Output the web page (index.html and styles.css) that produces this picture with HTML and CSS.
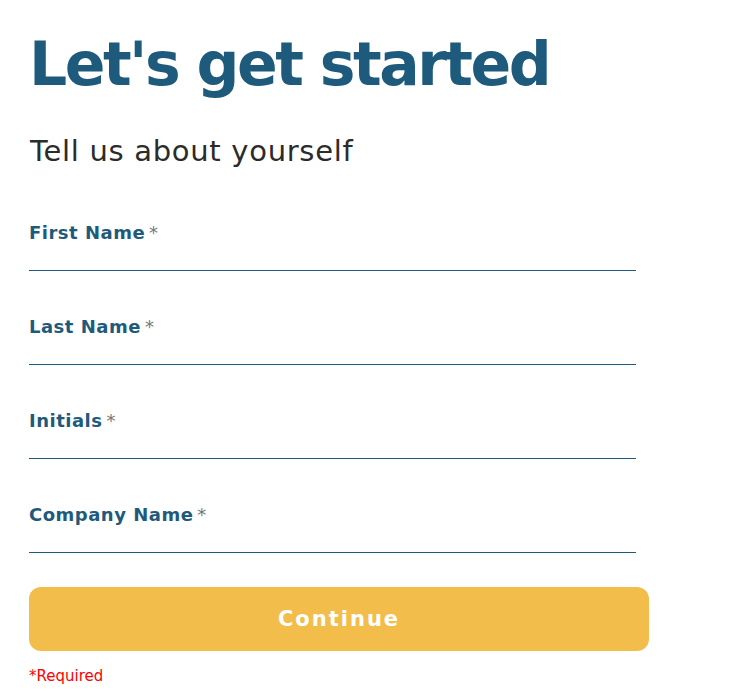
FILE: index.html
```html
<!DOCTYPE html>
<html lang="en">
<head>
    <meta charset="UTF-8">
    <meta name="viewport" content="width=device-width, initial-scale=1.0">
    <title>Let's get started</title>
    <link rel="stylesheet" href="styles.css">
</head>
<body>
    <div class="container">
        <h1>Let's get started</h1>
        <h2>Tell us about yourself</h2>

        <form class="signup">
            <div class="form-group">
                <label for="firstName">First Name<span class="req">*</span></label>
                <input type="text" id="firstName">
            </div>
            <div class="form-group">
                <label for="lastName">Last Name<span class="req">*</span></label>
                <input type="text" id="lastName">
            </div>
            <div class="form-group">
                <label for="initials">Initials<span class="req">*</span></label>
                <input type="text" id="initials">
            </div>
            <div class="form-group">
                <label for="company">Company Name<span class="req">*</span></label>
                <input type="text" id="company">
            </div>

            <button type="button">Continue</button>
            <p class="required-note">*Required</p>
        </form>
    </div>
</body>
</html>
```

FILE: styles.css
```css
body {
    margin: 0;
    font-family: "DejaVu Sans", Arial, sans-serif;
    background-color: #fff;
}
.container {
    width: 620px;
    padding: 26px 0 0 29px;
}
h1 {
    margin: 0;
    font-size: 60px;
    font-weight: bold;
    color: #1e5a7c;
    letter-spacing: -2.5px;
    line-height: 76px;
}
h2 {
    margin: 32px 0 0 1px;
    font-size: 29px;
    font-weight: normal;
    color: #2b2b2b;
    letter-spacing: 0.7px;
    line-height: 34px;
}
.signup {
    margin-top: 42px;
}
.form-group {
    width: 607px;
    padding-top: 12px;
    margin-bottom: 33px;
}
.form-group label {
    display: block;
    font-size: 18px;
    font-weight: bold;
    color: #1e5a7c;
    letter-spacing: 0.5px;
    line-height: 22px;
}
.req {
    margin-left: 4px;
    font-weight: normal;
    color: #777;
}
.form-group input {
    display: block;
    box-sizing: border-box;
    width: 100%;
    height: 27px;
    padding: 0;
    border: none;
    border-bottom: 1px solid #1e5a7c;
    outline: none;
    background: transparent;
}
button {
    display: block;
    width: 620px;
    height: 64px;
    margin-top: 34px;
    border: none;
    border-radius: 12px;
    background-color: #f3bd4b;
    color: #fff;
    font-family: inherit;
    font-size: 21px;
    font-weight: 600;
    letter-spacing: 2px;
    cursor: pointer;
}
.required-note {
    margin: 16px 0 0;
    font-size: 15px;
    color: #f00;
}
```
